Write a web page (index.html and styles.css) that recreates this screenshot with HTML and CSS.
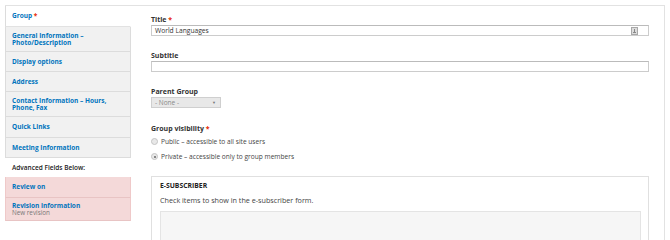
FILE: index.html
```html
<!DOCTYPE html>
<html>
<head>
<meta charset="utf-8">
<link rel="stylesheet" href="styles.css">
</head>
<body>
<div class="vt">
  <div class="tabs">
    <ul class="tab-list">
      <li class="tab active h21"><a>Group <span class="req">*</span></a></li>
      <li class="tab h25"><a>General Information – Photo/Description</a></li>
      <li class="tab h20"><a>Display options</a></li>
      <li class="tab h20"><a>Address</a></li>
      <li class="tab h25"><a>Contact Information – Hours, Phone, Fax</a></li>
      <li class="tab h21"><a>Quick Links</a></li>
      <li class="tab h20"><a>Meeting Information</a></li>
    </ul>
    <div class="adv">Advanced Fields Below:</div>
    <ul class="tab-list pink">
      <li class="tab h21"><a>Review on</a></li>
      <li class="tab h23"><a>Revision information</a><span class="sum">New revision</span></li>
    </ul>
  </div>
  <div class="pane">
    <div class="item">
      <label class="lbl">Title <span class="req">*</span></label>
      <div class="input">World Languages<svg class="key" width="7" height="8" viewBox="0 0 7 8"><rect x="0.5" y="0.5" width="6" height="7" fill="#dcdcdc" stroke="#a8a8a8"/><rect x="3" y="2" width="1" height="3" fill="#888"/><rect x="2" y="5" width="3" height="1" fill="#888"/></svg></div>
    </div>
    <div class="item">
      <label class="lbl">Subtitle</label>
      <div class="input"></div>
    </div>
    <div class="item">
      <label class="lbl">Parent Group</label>
      <div class="select"><span>- None -</span><span class="arr">▼</span></div>
    </div>
    <div class="item vis">
      <label class="lbl">Group visibility <span class="req">*</span></label>
      <div class="radio"><span class="dot"></span>Public – accessible to all site users</div>
      <div class="radio"><span class="dot on"></span>Private – accessible only to group members</div>
    </div>
    <div class="fieldset">
      <div class="legend">E-SUBSCRIBER</div>
      <div class="desc">Check items to show in the e-subscriber form.</div>
      <div class="inner"></div>
    </div>
  </div>
</div>
</body>
</html>
```

FILE: styles.css
```css
html, body {
  margin: 0;
  padding: 0;
  background: #fff;
  overflow: hidden;
  height: 236px;
}
body {
  font-family: "Open Sans", "Liberation Sans", sans-serif;
  color: #333;
  padding: 5px 5px 0 5px;
}
.vt {
  display: flex;
  border-top: 1px solid #e2e2e2;
  border-right: 1px solid #e2e2e2;
  width: 659px;
  height: 300px;
}
.tabs {
  width: 126px;
  flex: none;
}
.tab-list {
  list-style: none;
  margin: 0;
  padding: 0;
}
.tab {
  box-sizing: border-box;
  background: #f1f1f1;
  border-left: 1px solid #dcdcdc;
  border-right: 1px solid #dcdcdc;
  border-bottom: 1px solid #dcdcdc;
  padding: 0 6px;
  display: flex;
  flex-direction: column;
  justify-content: center;
  font-size: 6.5px;
  line-height: 7.5px;
  font-weight: 700;
}
.tab a {
  color: #0074bd;
}
.tab.active {
  background: #fff;
  border-right-color: #fff;
  border-bottom-color: #e2e2e2;
}
.h20 { height: 20px; }
.h21 { height: 21px; }
.h23 { height: 23px; }
.h25 { height: 25px; }
.req {
  color: #e62600;
}
.adv {
  height: 19px;
  box-sizing: border-box;
  padding: 0 7px;
  display: flex;
  align-items: center;
  font-size: 6.5px;
  font-weight: 600;
  color: #222;
}
.pink .tab {
  background: #f4d9d9;
  border-left-color: #efc9c9;
  border-right-color: #efc9c9;
  border-bottom-color: #e8c4c4;
}
.sum {
  font-weight: 400;
  color: #777;
  font-size: 6.3px;
  line-height: 7.5px;
}
.pane {
  flex: 1;
  padding: 9px 15px 0 20px;
}
.item {
  margin-bottom: 15px;
}
.lbl {
  display: block;
  font-size: 7px;
  line-height: 9px;
  font-weight: 700;
  color: #333;
  margin-bottom: 1px;
}
.input {
  box-sizing: border-box;
  height: 11px;
  border: 1px solid #ccc;
  border-top-color: #bbb;
  font-size: 6.7px;
  line-height: 9px;
  padding: 0 3px;
  color: #333;
  display: flex;
  align-items: center;
  justify-content: space-between;
}
.key {
  display: block;
  margin-right: 7px;
}
.select {
  box-sizing: border-box;
  width: 70px;
  height: 11px;
  background: #e8e8e8;
  border: 1px solid #cfcfcf;
  font-size: 6.5px;
  color: #8a8a8a;
  padding: 0 4px 0 3px;
  display: flex;
  align-items: center;
  justify-content: space-between;
}
.arr {
  font-size: 4px;
  color: #777;
}
.vis {
  margin-top: 16px;
}
.vis .lbl {
  margin-bottom: 4px;
}
.radio {
  display: flex;
  align-items: center;
  font-size: 6.6px;
  line-height: 9px;
  color: #444;
  margin-bottom: 6px;
}
.dot {
  box-sizing: border-box;
  width: 7px;
  height: 7px;
  border-radius: 50%;
  border: 1px solid #c4c4c4;
  background: #e8e8e8;
  margin-right: 3px;
  position: relative;
}
.dot.on::after {
  content: "";
  position: absolute;
  left: 1.5px;
  top: 1.5px;
  width: 2px;
  height: 2px;
  border-radius: 50%;
  background: #666;
}
.fieldset {
  border: 1px solid #e0e0e0;
  margin-top: 11px;
  padding: 4px 7px 0 8px;
}
.legend {
  font-size: 6.8px;
  line-height: 9px;
  font-weight: 700;
  color: #222;
}
.desc {
  margin-top: 6px;
  font-size: 7.2px;
  line-height: 9px;
  color: #444;
}
.inner {
  margin-top: 6px;
  height: 40px;
  background: #f6f6f6;
  border: 1px solid #e4e4e4;
}
```
